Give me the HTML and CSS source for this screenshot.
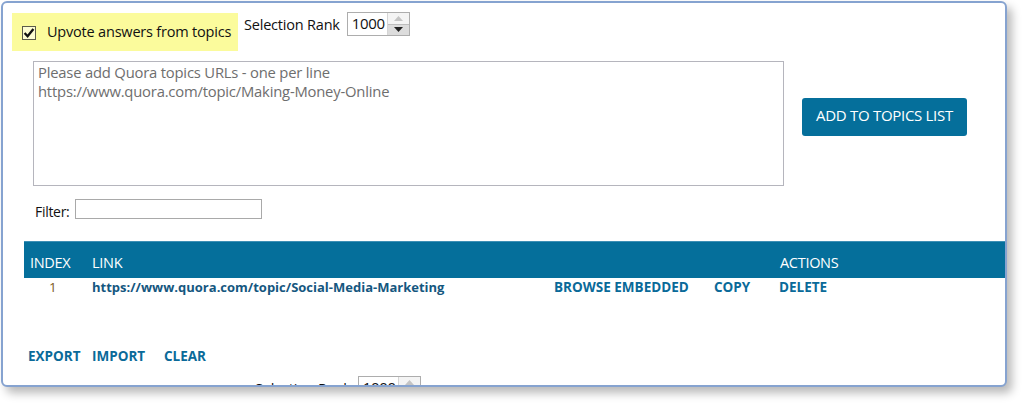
FILE: index.html
```html
<!DOCTYPE html>
<html>
<head>
<meta charset="utf-8">
<link rel="stylesheet" href="styles.css">
</head>
<body>
<div class="window">
  <div class="top-row">
    <label class="upvote">
      <span class="check"><svg width="12" height="12" viewBox="0 0 12 12"><path d="M1.6 6 L4.6 9.2 L10.4 2" fill="none" stroke="#111" stroke-width="2.3"/></svg></span>
      <span class="upvote-text">Upvote answers from topics</span>
    </label>
    <div class="rank">
      <span class="rank-label">Selection Rank</span>
      <div class="spinner">
        <span class="spin-value">1000</span>
        <div class="spin-buttons">
          <span class="spin-up"><svg width="9" height="5" viewBox="0 0 9 5"><path d="M0 5 L4.5 0 L9 5Z" fill="#c4c4c4"/></svg></span>
          <span class="spin-down"><svg width="9" height="5" viewBox="0 0 9 5"><path d="M0 0 L4.5 5 L9 0Z" fill="#222"/></svg></span>
        </div>
      </div>
    </div>
  </div>

  <div class="entry-row">
    <div class="urls">Please add Quora topics URLs - one per line<br>https://www.quora.com/topic/Making-Money-Online</div>
    <button class="add-btn">ADD TO TOPICS LIST</button>
  </div>

  <div class="filter-row">
    <span class="filter-label">Filter:</span>
    <span class="filter-input"></span>
  </div>

  <div class="table">
    <div class="thead">
      <span class="c-index">INDEX</span>
      <span class="c-link">LINK</span>
      <span class="c-actions">ACTIONS</span>
    </div>
    <div class="trow">
      <span class="c-index num">1</span>
      <span class="c-link link">https://www.quora.com/topic/Social-Media-Marketing</span>
      <span class="c-browse act">BROWSE EMBEDDED</span>
      <span class="c-copy act">COPY</span>
      <span class="c-actions act">DELETE</span>
    </div>
  </div>

  <div class="bottom-links">
    <span class="act b-export">EXPORT</span>
    <span class="act b-import">IMPORT</span>
    <span class="act">CLEAR</span>
  </div>

  <div class="rank rank-ghost">
    <span class="rank-label">Selection Rank</span>
    <div class="spinner">
      <span class="spin-value">1000</span>
      <div class="spin-buttons">
        <span class="spin-up"><svg width="9" height="5" viewBox="0 0 9 5"><path d="M0 5 L4.5 0 L9 5Z" fill="#c4c4c4"/></svg></span>
        <span class="spin-down"><svg width="9" height="5" viewBox="0 0 9 5"><path d="M0 0 L4.5 5 L9 0Z" fill="#222"/></svg></span>
      </div>
    </div>
  </div>
</div>
</body>
</html>
```
FILE: styles.css
```css
* { box-sizing: border-box; }
html, body { margin: 0; padding: 0; background: #fff; }
body {
  font-family: "Open Sans", "Noto Sans", sans-serif;
  font-size: 14px;
  color: #111;
  width: 1023px;
  height: 403px;
  overflow: hidden;
}
.window {
  margin: 1px 0 0 1px;
  width: 1006px;
  height: 386px;
  border: 2px solid #86a3d0;
  border-radius: 6px;
  background: #fff;
  box-shadow: 5px 6px 10px rgba(0,0,0,0.28);
  overflow: hidden;
  display: flex;
  flex-direction: column;
}
.top-row {
  display: flex;
  align-items: flex-start;
  margin: 10px 0 0 9px;
  height: 38px;
  flex-shrink: 0;
}
.upvote {
  display: flex;
  align-items: center;
  width: 226px;
  height: 38px;
  background: #fbfb9c;
  padding-left: 10px;
}
.check {
  width: 14px;
  height: 14px;
  border: 1px solid #5b5b4a;
  background: #fdfdd2;
  display: flex;
  align-items: center;
  justify-content: center;
  margin-top: 1px;
}
.upvote-text {
  margin-left: 11px;
  font-size: 14.5px;
  letter-spacing: -0.2px;
  color: #111;
  margin-top: -1px;
}
.rank {
  display: flex;
  align-items: center;
  margin-left: 6px;
  margin-top: -1px;
  flex-shrink: 0;
}
.rank-label {
  font-size: 14.5px;
  letter-spacing: -0.2px;
  color: #111;
}
.spinner {
  display: flex;
  margin-left: 7px;
  height: 24px;
  border: 1px solid #adadad;
  background: #fff;
}
.spin-value {
  width: 39px;
  padding-left: 4px;
  font-size: 15px;
  letter-spacing: -0.3px;
  line-height: 20px;
}
.spin-buttons {
  width: 22px;
  display: flex;
  flex-direction: column;
  border-left: 1px solid #d5d5d5;
}
.spin-up, .spin-down {
  flex: 1;
  display: flex;
  align-items: center;
  justify-content: center;
}
.spin-up { background: #f4f4f4; }
.spin-down { background: #dcdcdc; border-top: 1px solid #bdbdbd; }

.entry-row {
  display: flex;
  align-items: center;
  margin: 10px 0 0 30px;
  flex-shrink: 0;
}
.urls {
  width: 751px;
  height: 125px;
  border: 1px solid #b5b5bd;
  padding: 1px 4px;
  font-size: 14.8px;
  letter-spacing: -0.2px;
  line-height: 19px;
  color: #6e6e6e;
}
.add-btn {
  margin: 0 0 14px 18px;
  width: 165px;
  height: 38px;
  border: none;
  border-radius: 3px;
  background: #056f9b;
  color: #fff;
  font-family: inherit;
  font-size: 15px;
  letter-spacing: -0.3px;
  padding: 0 0 4px 0;
}
.filter-row {
  display: flex;
  align-items: center;
  margin: 13px 0 0 32px;
  height: 20px;
  flex-shrink: 0;
}
.filter-label {
  font-size: 14px;
  letter-spacing: -0.3px;
  margin-right: 6px;
  margin-top: 5px;
}
.filter-input {
  width: 187px;
  height: 20px;
  border: 1px solid #a9a9a9;
}
.table {
  margin: 22px 0 0 21px;
  flex-shrink: 0;
}
.thead, .trow {
  display: flex;
  align-items: center;
}
.thead {
  height: 37px;
  background: #056f9b;
  border-top: 1px solid #3d8fb5;
  color: #fff;
  font-size: 14.5px;
  letter-spacing: -0.3px;
  padding-top: 4px;
}
.trow {
  height: 18px;
}
.c-index { width: 62px; padding-left: 6px; }
.num { padding-left: 25px; color: #7d5b22; font-weight: 400; font-size: 13.5px; }
.c-link { width: 468px; padding-left: 6px; }
.thead .c-link { width: 694px; }
.link { font-weight: 700; color: #15577f; font-size: 13px; }
.c-browse { width: 160px; }
.c-copy { width: 65px; }
.act { font-weight: 700; color: #0a6a99; font-size: 13.5px; }
.bottom-links {
  display: flex;
  margin: 51px 0 0 25px;
  flex-shrink: 0;
}
.b-export { width: 64px; }
.b-import { width: 72px; }
.rank-ghost {
  margin: 11px 0 0 252px;
}
```
